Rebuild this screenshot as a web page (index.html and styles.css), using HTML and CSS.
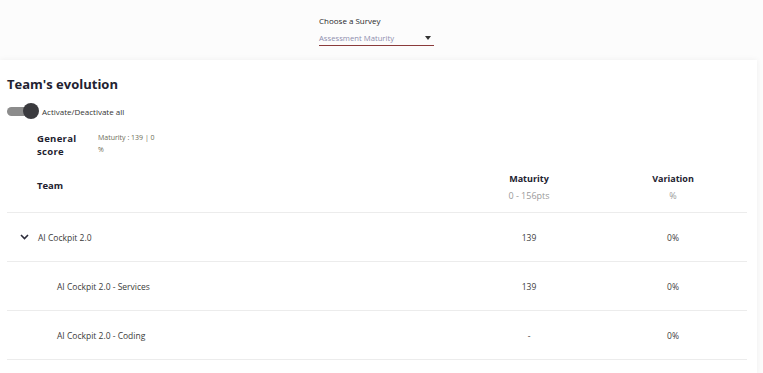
FILE: index.html
```html
<!DOCTYPE html>
<html lang="en">
<head>
    <meta charset="UTF-8" />
    <meta name="viewport" content="width=device-width, initial-scale=1.0"/>
    <title>Team's evolution</title>
    <link rel="stylesheet" href="styles.css">
</head>
<body>
    <!-- ===== SURVEY PICKER ===== -->
    <div class="survey-bar">
        <div class="survey">
            <div class="survey-label">Choose a Survey</div>
            <div class="survey-select">
                <span>Assessment Maturity</span>
                <span class="caret"></span>
            </div>
        </div>
    </div>

    <!-- ===== CARD ===== -->
    <div class="card">
        <h1>Team's evolution</h1>
        <div class="toggle-row">
            <span class="toggle"><span class="knob"></span></span>
            <span class="toggle-label">Activate/Deactivate all</span>
        </div>
        <div class="general">
            <div class="general-title">General<br>score</div>
            <div class="general-value">Maturity : 139 | 0<br>%</div>
        </div>

        <div class="grid head">
            <div class="c-team"><b>Team</b></div>
            <div class="c-num"><b>Maturity</b><span class="sub">0 - 156pts</span></div>
            <div class="c-num"><b>Variation</b><span class="sub">%</span></div>
        </div>
        <div class="grid row">
            <div class="c-team lvl1">
                <svg class="chev" width="9" height="6" viewBox="0 0 9 6"><path d="M1 1l3.5 3.5L8 1" fill="none" stroke="#2b2b3a" stroke-width="1.6"/></svg>
                AI Cockpit 2.0
            </div>
            <div class="c-num">139</div>
            <div class="c-num">0%</div>
        </div>
        <div class="grid row">
            <div class="c-team lvl2">AI Cockpit 2.0 - Services</div>
            <div class="c-num">139</div>
            <div class="c-num">0%</div>
        </div>
        <div class="grid row">
            <div class="c-team lvl2">AI Cockpit 2.0 - Coding</div>
            <div class="c-num dash">-</div>
            <div class="c-num">0%</div>
        </div>
    </div>
</body>
</html>
```
FILE: styles.css
```css
body{
    margin:0;background:#fcfcfc;
    font-family:"Open Sans",Arial,sans-serif;color:#2b2b3a;
}

/* Survey picker */
.survey-bar{height:60px;display:flex;justify-content:center;padding-right:10px;}
.survey{width:115px;padding-top:15px;}
.survey-label{font-size:8px;line-height:12px;color:#1f1f2a;}
.survey-select{
    display:flex;justify-content:space-between;align-items:center;
    margin-top:3px;height:15px;font-size:7.7px;color:#8e8eae;
    border-bottom:1px solid #8b3b3b;padding-right:3px;
}
.caret{
    width:0;height:0;border-left:3.5px solid transparent;border-right:3.5px solid transparent;
    border-top:4px solid #333;
}

/* Card */
.card{
    background:#fff;margin-right:6px;padding:14px 10px 0 7px;height:300px;
    box-shadow:0 0 6px rgba(0,0,0,.06);
}
h1{margin:0;font-size:13px;line-height:20px;font-weight:700;color:#222230;}
.toggle-row{display:flex;align-items:center;height:18px;margin-top:8px;}
.toggle{position:relative;width:32px;height:18px;display:flex;align-items:center;}
.toggle::before{content:"";width:26px;height:9px;border-radius:5px;background:#8c8c8c;}
.knob{
    position:absolute;left:16px;top:1px;width:16px;height:16px;
    border-radius:50%;background:#3a3a3e;
}
.toggle-label{font-size:8px;margin-left:3px;color:#333;}

.general{display:flex;margin-top:12px;padding-left:30px;height:26px;}
.general-title{width:61px;font-size:9.5px;letter-spacing:.3px;font-weight:700;line-height:13px;color:#222230;}
.general-value{font-size:7px;line-height:12px;color:#6c6c55;}

/* Table */
.grid{display:grid;grid-template-columns:450px 144px 144px;border-bottom:1px solid #ececec;}
.head{height:53px;margin-top:1px;}
.row{height:48px;}
.grid>div{display:flex;align-items:center;font-size:8.5px;color:#3b3b3b;}
.c-num{flex-direction:column;justify-content:center;}
.head b{font-size:9px;color:#222230;}
.head .c-team b{font-size:9.5px;}
.head .c-num{justify-content:flex-start;padding-top:13px;}
.head .c-team{padding-left:30px;}
.sub{font-size:9px;color:#9a9a9a;margin-top:4px;}
.lvl1{padding-left:13px;}
.chev{margin-right:9px;}
.lvl2{padding-left:50px;}
.dash{color:#999;}
```
